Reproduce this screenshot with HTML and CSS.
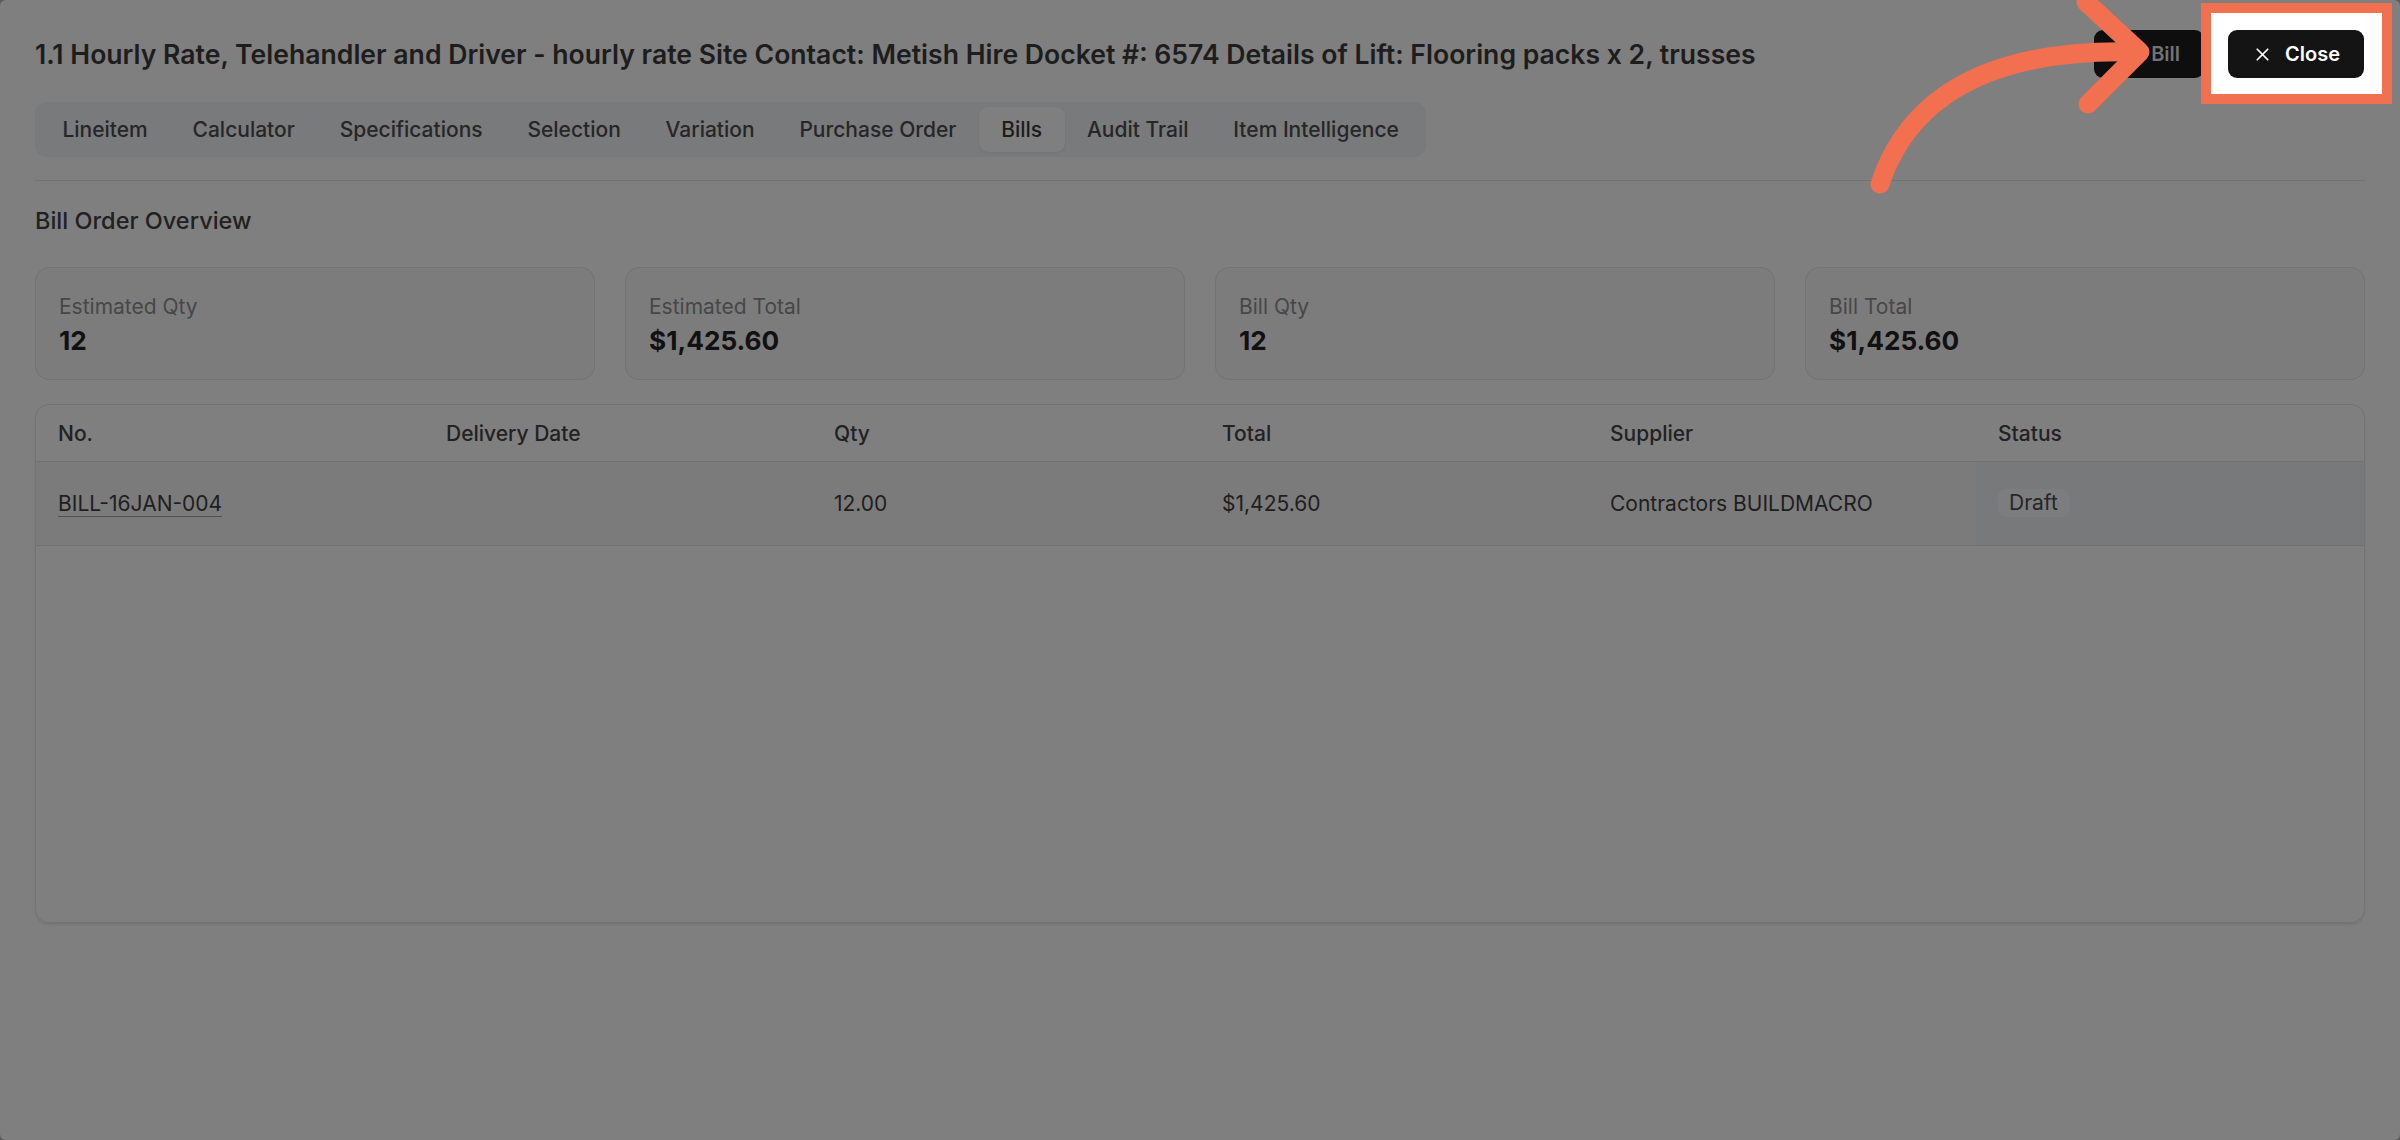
FILE: index.html
```html
<!DOCTYPE html>
<html lang="en">
<head>
<meta charset="utf-8">
<title>Bills</title>
<link rel="stylesheet" href="styles.css">
</head>
<body>
<div class="modal">
  <header class="modal-header">
    <h1 class="title">1.1 Hourly Rate, Telehandler and Driver - hourly rate Site Contact: Metish Hire Docket #: 6574 Details of Lift: Flooring packs x 2, trusses</h1>
    <div class="actions">
      <button class="btn btn-bill">
        <svg class="btn-icon" viewBox="0 0 24 24" fill="none" stroke="currentColor" stroke-width="2" stroke-linecap="round"><path d="M12 5v14M5 12h14"/></svg>
        <span>Bill</span>
      </button>
      <div class="highlight">
        <span class="highlight-box"></span>
        <button class="btn btn-close">
          <svg class="btn-icon" viewBox="0 0 24 24" fill="none" stroke="currentColor" stroke-width="2" stroke-linecap="round"><path d="M18 6 6 18M6 6l12 12"/></svg>
          <span>Close</span>
        </button>
      </div>
    </div>
  </header>

  <nav class="tabs">
    <span class="tab">Lineitem</span>
    <span class="tab">Calculator</span>
    <span class="tab">Specifications</span>
    <span class="tab">Selection</span>
    <span class="tab">Variation</span>
    <span class="tab">Purchase Order</span>
    <span class="tab active">Bills</span>
    <span class="tab">Audit Trail</span>
    <span class="tab">Item Intelligence</span>
  </nav>

  <div class="divider"></div>

  <section class="overview">
    <h2 class="section-title">Bill Order Overview</h2>
    <div class="stats">
      <div class="stat"><div class="stat-label">Estimated Qty</div><div class="stat-value">12</div></div>
      <div class="stat"><div class="stat-label">Estimated Total</div><div class="stat-value">$1,425.60</div></div>
      <div class="stat"><div class="stat-label">Bill Qty</div><div class="stat-value">12</div></div>
      <div class="stat"><div class="stat-label">Bill Total</div><div class="stat-value">$1,425.60</div></div>
    </div>

    <div class="table-wrap">
      <table class="bills">
        <thead>
          <tr>
            <th>No.</th>
            <th>Delivery Date</th>
            <th>Qty</th>
            <th>Total</th>
            <th>Supplier</th>
            <th>Status</th>
          </tr>
        </thead>
        <tbody>
          <tr class="row">
            <td><a class="bill-link">BILL-16JAN-004</a></td>
            <td></td>
            <td>12.00</td>
            <td>$1,425.60</td>
            <td>Contractors BUILDMACRO</td>
            <td class="status-cell"><span class="badge">Draft</span></td>
          </tr>
        </tbody>
      </table>
    </div>
  </section>

  <svg class="arrow" viewBox="0 0 2400 200" width="2400" height="200" fill="none" stroke="#f26f50" stroke-width="19" stroke-linecap="round" stroke-linejoin="round">
    <path d="M1880 184 Q1926 46 2138 52"/>
    <path d="M2086 2 L2140 52 L2088 104"/>
  </svg>
</div>
</body>
</html>
```

FILE: styles.css
```css
* { box-sizing: border-box; }

html, body {
  margin: 0;
  padding: 0;
  width: 2400px;
  height: 1140px;
  overflow: hidden;
  background: #5e5e5e;
  font-family: Inter, "Noto Sans", "Liberation Sans", sans-serif;
  color: #1c1c1c;
}

.modal {
  position: relative;
  width: 2400px;
  height: 1140px;
  background: #7f7f7f;
  border-radius: 6px;
  padding: 30px 35px 0 35px;
}

.modal-header {
  display: flex;
  align-items: center;
  justify-content: space-between;
  height: 48px;
}

.title {
  margin: 0;
  font-size: 26.6px;
  font-weight: 600;
  line-height: 36px;
  color: #1d1d1d;
  white-space: nowrap;
}

.actions {
  display: flex;
  align-items: center;
  gap: 24px;
  margin-right: 1px;
}

.btn {
  display: flex;
  align-items: center;
  gap: 12px;
  height: 48px;
  padding: 0 24px;
  border: none;
  border-radius: 9px;
  font-family: inherit;
  font-size: 20px;
  font-weight: 600;
}

.btn-icon {
  width: 21px;
  height: 21px;
  flex: none;
}

.btn-bill {
  background: #0e0e0e;
  color: #737373;
}

.btn-close {
  position: relative;
  z-index: 2;
  background: #141414;
  color: #ffffff;
}

.highlight {
  position: relative;
}

.highlight-box {
  position: absolute;
  left: -27px;
  right: -28px;
  top: -27px;
  bottom: -26px;
  background: #ffffff;
  border: 10px solid #f0704f;
  z-index: 1;
}

.tabs {
  display: inline-flex;
  gap: 0;
  margin-top: 24px;
  padding: 5px;
  background: #797a7c;
  border-radius: 12px;
}

.tab {
  display: flex;
  align-items: center;
  height: 45px;
  padding: 0 22.4px;
  font-size: 21px;
  font-weight: 500;
  color: #262626;
  border-radius: 9px;
}

.tab.active {
  background: #7f7f7f;
  color: #1c1c1c;
  box-shadow: 0 1px 3px rgba(0, 0, 0, 0.06);
}

.divider {
  height: 1px;
  background: #727272;
  margin-top: 23px;
}

.section-title {
  margin: 23px 0 0 0;
  font-size: 23.5px;
  font-weight: 500;
  line-height: 34px;
  color: #212121;
}

.stats {
  display: grid;
  grid-template-columns: repeat(4, 1fr);
  gap: 30px;
  margin-top: 29px;
}

.stat {
  height: 113px;
  padding: 25px 23px 23px;
  border: 1px solid #737373;
  border-radius: 14px;
  background: #7c7c7c;
}

.stat-label {
  font-size: 21px;
  line-height: 28px;
  color: #474747;
}

.stat-value {
  margin-top: 3px;
  font-size: 26.2px;
  font-weight: 700;
  line-height: 33px;
  color: #111111;
}

.table-wrap {
  margin-top: 24px;
  height: 519px;
  border: 1px solid #737373;
  border-radius: 14px;
  overflow: hidden;
  box-shadow: 0 2px 2px rgba(0, 0, 0, 0.08);
}

.bills {
  width: 100%;
  border-collapse: collapse;
  table-layout: fixed;
}

.bills th {
  height: 56px;
  padding: 2px 22px 0;
  text-align: left;
  font-size: 21px;
  font-weight: 500;
  color: #222222;
  border-bottom: 1px solid #717171;
}

.bills td {
  height: 84px;
  padding: 0 22px;
  font-size: 21px;
  color: #1e1e1e;
  border-bottom: 1px solid #717171;
}

.row td {
  background: #7b7b7b;
}

.row td.status-cell {
  background: #78797b;
}

.bill-link {
  text-decoration: underline;
  text-decoration-color: #505050;
  text-underline-offset: 5px;
  text-decoration-thickness: 1px;
}

.badge {
  display: inline-block;
  padding: 0 11px;
  height: 28px;
  line-height: 28px;
  border-radius: 8px;
  background: #7c7d7f;
  color: #262626;
}

.arrow {
  position: absolute;
  left: 0;
  top: 0;
  z-index: 3;
  pointer-events: none;
}
```
